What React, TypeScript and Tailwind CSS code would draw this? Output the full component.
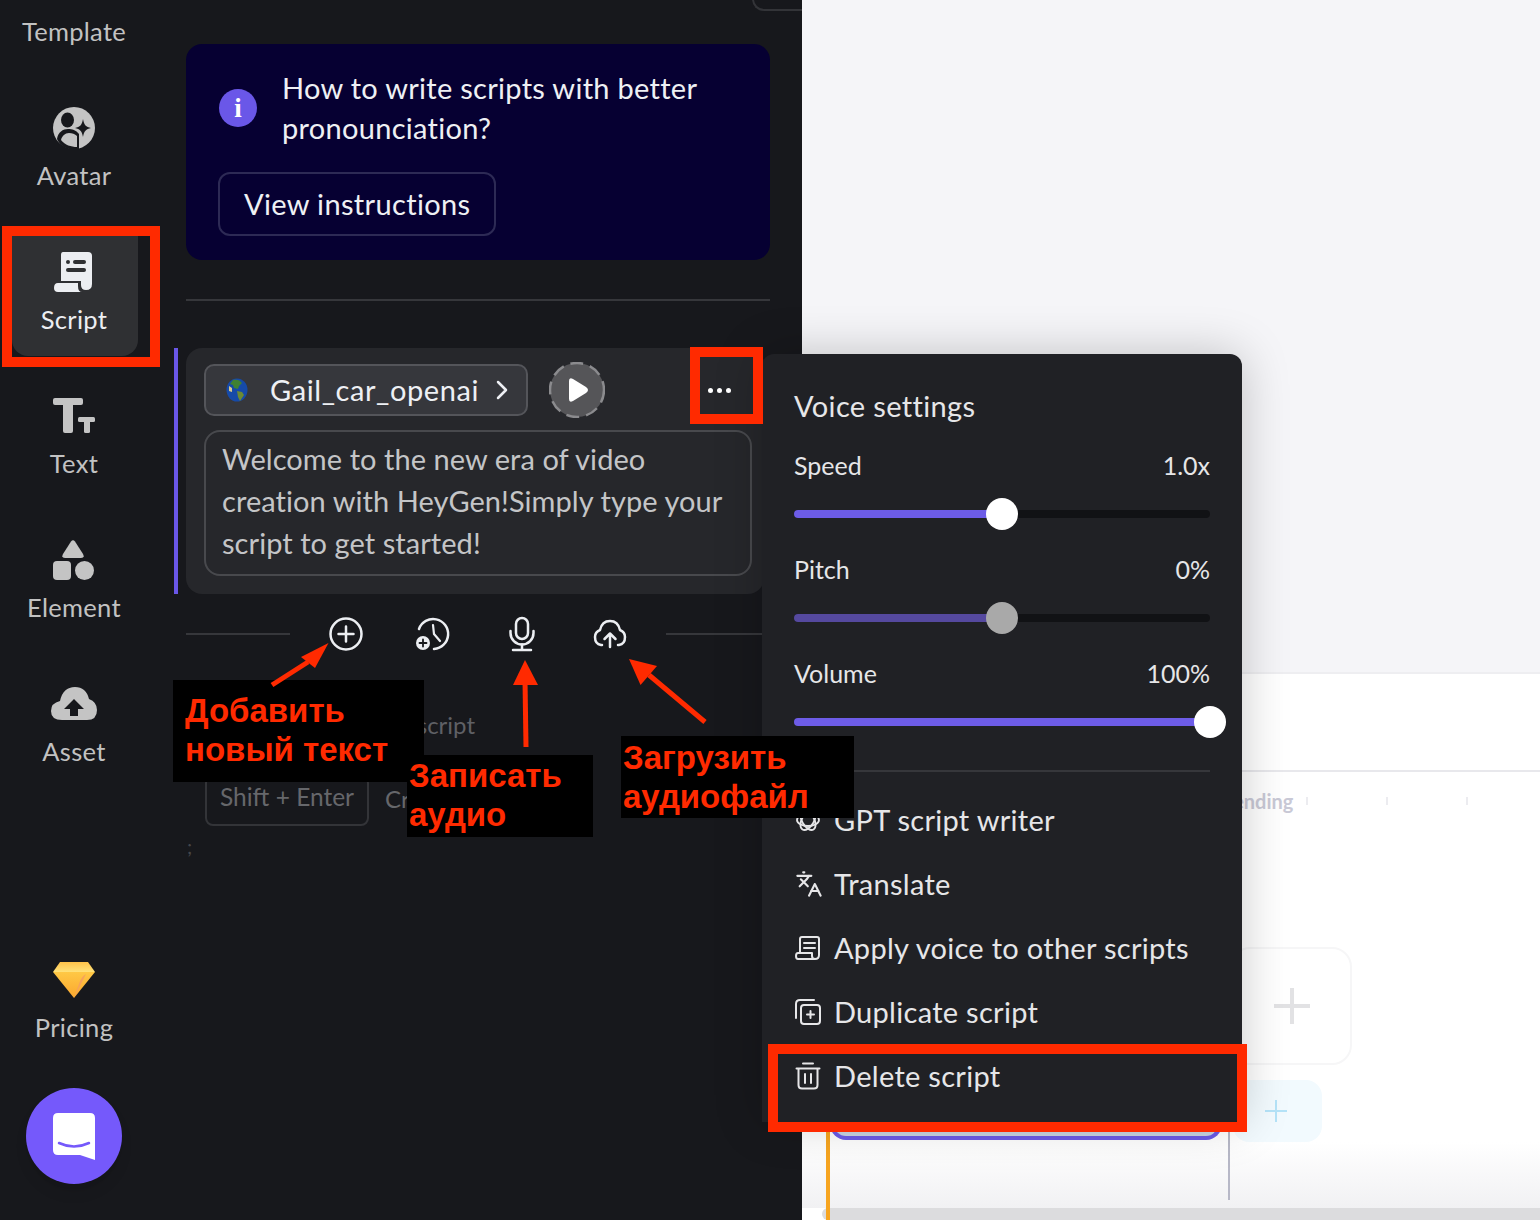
import React from "react";
import { Languages } from "lucide-react";

function NavItem({ label, icon, active, itemClass = "" }: { label: string; icon: React.ReactNode; active?: boolean; itemClass?: string }) {
  return (
    <div className={`h-[120px] w-[126px] rounded-b-2xl flex flex-col items-center pr-[2px] pt-3 ${active ? "bg-[#2f3033] text-[#eceef2]" : "text-[#c2c2c2]"} ${itemClass}`}>
      <div className="h-12 w-full flex items-center justify-center">{icon}</div>
      <div className="mt-[11px] h-6 leading-6 text-[25.500px] tracking-[0.012em]">{label}</div>
    </div>
  );
}

const AvatarIcon = () => (
  <svg width="42" height="42" viewBox="0 0 42 42">
    <circle cx="21" cy="21" r="21" fill="#c4c4c4" />
    <ellipse cx="14.5" cy="13" rx="6.5" ry="7.5" fill="#17181c" />
    <path d="M4 32C5 25 10 22 15 22c4 0 8 1 11 5v15H16C11 41 6 37 4 32Z" fill="#17181c" />
    <path d="M8 33c1-4 4-7 8-7 3 0 6 1 8 3v11c-6 0-12-2-16-7Z" fill="#c4c4c4" />
    <path d="M30 12c1 6 3 8 8 9-5 1-7 3-8 9-1-6-3-8-8-9 5-1 7-3 8-9Z" fill="#17181c" />
  </svg>
);
const ScriptIcon = () => (
  <svg width="40" height="44" viewBox="54 250 40 44">
    <path d="M63 252H88Q92 252 92 256V284Q92 290 86 290Q81 290 81 285V281H61V255Q61 252 63 252Z" fill="#eceef2" />
    <path d="M58 283H78V286Q78 292 82 292H58Q54 292 54 288Q54 283 58 283Z" fill="#eceef2" />
    <circle cx="68" cy="262" r="2" fill="#2f3033" />
    <rect x="73" y="260" width="13" height="4" rx="2" fill="#2f3033" />
    <rect x="66" y="268" width="20" height="4" rx="2" fill="#2f3033" />
  </svg>
);
const TextIcon = () => (
  <svg width="42" height="36" viewBox="53 399 42 36" fill="#c4c4c4">
    <rect x="53" y="399" width="30" height="7" rx="2" />
    <rect x="63" y="399" width="10" height="35" rx="2" />
    <rect x="78" y="418" width="17" height="5" rx="1.5" />
    <rect x="84" y="418" width="6" height="16" rx="1.5" />
  </svg>
);
const ElementIcon = () => (
  <svg width="42" height="40" viewBox="53 540 42 40" fill="#c4c4c4">
    <path d="M71 541.5Q73 539 75 541.5L83 554Q85 558 81 558H65Q61 558 63 554Z" />
    <rect x="53" y="561" width="18" height="19" rx="4" />
    <ellipse cx="84.500" cy="570.500" rx="9.500" ry="9.500" />
  </svg>
);
const AssetIcon = () => (
  <svg width="46" height="34" viewBox="51 686 46 34">
    <path d="M62 719Q51 719 51 710Q51 702 60 700Q63 686 75 686Q86 686 89 698Q97 701 97 709Q97 719 87 719Z" fill="#c4c4c4" />
    <path d="M74 698L84 708H78V715H70V708H64Z" fill="#17181c" />
  </svg>
);
const GemIcon = () => (
  <svg width="42" height="36" viewBox="53 962 42 36">
    <defs>
      <linearGradient id="gemTop" x1="0" y1="0" x2="0" y2="1"><stop offset="0" stopColor="#ffc24a" /><stop offset="1" stopColor="#ffe27a" /></linearGradient>
      <linearGradient id="gemLow" x1="0" y1="0" x2="0" y2="1"><stop offset="0" stopColor="#ffc845" /><stop offset="1" stopColor="#fba72e" /></linearGradient>
    </defs>
    <path d="M60 962H88L95 972H53Z" fill="url(#gemTop)" />
    <path d="M53 972H95L74 998Z" fill="url(#gemLow)" />
    <path d="M86 974L74 998L79 984Q81 977 86 974Z" fill="#f6a25c" />
  </svg>
);

const LogoBubble = () => (
  <svg width="42" height="47" viewBox="53 1112 42 47">
    <path d="M58 1112H90Q95 1112 95 1117V1159L80 1154H58Q53 1154 53 1149V1117Q53 1112 58 1112Z" fill="#ffffff" />
    <path d="M59 1142Q74 1149 89 1142" fill="none" stroke="#7559fb" strokeWidth="2.500" strokeLinecap="round" />
  </svg>
);

const Globe = () => (
  <svg width="22" height="24" viewBox="0 0 22 24">
    <ellipse cx="11" cy="12" rx="10.500" ry="11.500" fill="#164aa8" />
    <path d="M7 2c4-1 7 0 9 3l-3 3-1 3-4-1-1-3-3-1Z" fill="#3f8132" />
    <path d="M11 13l5 1 2 3-4 6-2-4Z" fill="#6b8a34" />
    <path d="M3 8l3 2 0 4-3-1Z" fill="#d8c98a" />
  </svg>
);

const PlayBadge = () => (
  <svg width="56" height="56" viewBox="0 0 56 56">
    <circle cx="28" cy="28" r="27" fill="#555558" stroke="#8b8b8e" strokeWidth="2.500" strokeDasharray="13 7" />
    <path d="M20 19Q20 15 24 17L37 25Q41 28 37 31L24 39Q20 41 20 37Z" fill="#ffffff" />
  </svg>
);

const PlusCircleIcon = () => (
  <svg width="36" height="36" viewBox="0 0 36 36" fill="none" stroke="#eceef2" strokeWidth="2.500" strokeLinecap="round">
    <circle cx="18" cy="18" r="15.500" />
    <path d="M18 10.500V25.500M10.500 18H25.500" />
  </svg>
);
const HistoryIcon = () => (
  <svg width="36" height="36" viewBox="0 0 36 36" fill="none" stroke="#eceef2" strokeWidth="2.500" strokeLinecap="round">
    <path d="M19 33A15 15 0 1 0 4 13" />
    <path d="M18 9L19 18L25 25" strokeWidth="2.200" />
    <circle cx="8" cy="27" r="7" fill="#eceef2" stroke="none" />
    <path d="M8 23.500V30.500M4.500 27H11.500" stroke="#17181c" strokeWidth="1.800" />
  </svg>
);
const MicIcon = () => (
  <svg width="28" height="36" viewBox="0 0 28 36" fill="none" stroke="#eceef2" strokeWidth="2.500" strokeLinecap="round">
    <rect x="8" y="2" width="12" height="21" rx="6" />
    <path d="M2.500 15V17A11.500 11.500 0 0 0 25.500 17V15" />
    <path d="M14 28.500V33M5 34H23" />
  </svg>
);
const UploadIcon = () => (
  <svg width="36" height="30" viewBox="0 0 36 30" fill="none" stroke="#eceef2" strokeWidth="2.500" strokeLinecap="round" strokeLinejoin="round">
    <path d="M10 26H9Q3 25 3 18Q3 13 8 11Q10 2 18 2Q26 2 28 11Q33 13 33 18Q33 25 27 26H26" />
    <path d="M18 28V15M12.500 20L18 14.500L23.500 20" />
  </svg>
);

const GptIcon = () => (
  <svg width="26" height="26" viewBox="0 0 26 26" fill="none" stroke="#e6e6e8" strokeWidth="1.800">
    <ellipse cx="13" cy="13" rx="11" ry="6" />
    <ellipse cx="13" cy="13" rx="11" ry="6" transform="rotate(60 13 13)" />
    <ellipse cx="13" cy="13" rx="11" ry="6" transform="rotate(120 13 13)" />
  </svg>
);
const ApplyIcon = () => (
  <svg width="26" height="26" viewBox="0 0 26 26" fill="none" stroke="#e6e6e8" strokeWidth="2" strokeLinejoin="round" strokeLinecap="round">
    <path d="M5 18V4Q5 2 7 2H22Q24 2 24 4V20Q24 24 20 24H3Q1 24 1 21Q1 18 3 18H17V21Q17 24 20 24" />
    <path d="M9 8H20M9 13H20" />
  </svg>
);
const DuplicateIcon = () => (
  <svg width="26" height="26" viewBox="0 0 26 26" fill="none" stroke="#e6e6e8" strokeWidth="2" strokeLinecap="round">
    <rect x="6" y="6" width="19" height="19" rx="3" />
    <path d="M1 19V5Q1 1 5 1H19" />
    <path d="M15.500 12V19M12 15.500H19" />
  </svg>
);
const TrashIcon = () => (
  <svg width="26" height="28" viewBox="0 0 26 28" fill="none" stroke="#e6e6e8" strokeWidth="2" strokeLinecap="round">
    <path d="M8 1.500H18M1.500 6.500H24.500" />
    <path d="M3.500 7V23Q3.500 26.500 7 26.500H19Q22.500 26.500 22.500 23V7" />
    <path d="M10 12V21M16 12V21" />
  </svg>
);

function Slider({ label, value, fill, thumb, pos }: { label: string; value: string; fill: string; thumb: string; pos: string }) {
  return (
    <div className="mb-[26px]">
      <div className="h-7 flex items-center justify-between text-[25px] text-[#e6e6e8]">
        <span>{label}</span>
        <span>{value}</span>
      </div>
      <div className="relative mt-[18px] h-8 flex items-center">
        <div className="h-2 w-full rounded-full bg-[#111215] overflow-hidden">
          <div className={`h-full ${pos} ${fill}`} />
        </div>
        <div className={`absolute top-0 ml-[-16px] h-8 w-8 rounded-full ${thumb} ${pos === "w-1/2" ? "left-1/2" : "left-full"}`} />
      </div>
    </div>
  );
}

function MenuItem({ icon, label }: { icon: React.ReactNode; label: string }) {
  return (
    <div className="h-16 flex items-center">
      <div className="w-10 flex items-center pl-px">{icon}</div>
      <span className="text-[29px] tracking-[0.01em] text-[#e6e6e8]">{label}</span>
    </div>
  );
}

function Note({ className, lines }: { className: string; lines: string[] }) {
  return (
    <div className={`absolute z-30 bg-black font-['Liberation_Sans',sans-serif] font-bold text-[33px] leading-[39px] text-[#ff2a00] ${className}`}>
      {lines.map((l) => <div key={l}>{l}</div>)}
    </div>
  );
}

export default function App() {
  return (
    <div className="relative flex h-[1220px] w-[1540px] overflow-hidden bg-white font-['Lato',sans-serif]">
      {/* Icon rail */}
      <nav className="flex h-full w-[148px] shrink-0 flex-col bg-[#17181c] pl-3">
        <div className="-mt-[52px] flex flex-col gap-6">
          <NavItem label="Template" icon={<div className="mt-[-46px] h-[2px] w-[33px] bg-[#8a8a8a]" />} />
          <NavItem label="Avatar" icon={<AvatarIcon />} />
          <NavItem label="Script" icon={<ScriptIcon />} active />
          <NavItem label="Text" icon={<TextIcon />} />
          <NavItem label="Element" icon={<ElementIcon />} />
          <NavItem label="Asset" icon={<AssetIcon />} />
        </div>
        <div className="mt-auto flex flex-col gap-6 pb-9">
          <NavItem label="Pricing" icon={<GemIcon />} />
          <div className="ml-[14px] flex h-24 w-24 items-center justify-center rounded-full bg-[#7559fb] shadow-lg">
            <LogoBubble />
          </div>
        </div>
      </nav>

      {/* Script panel */}
      <main className="relative w-[654px] shrink-0 bg-[#17181c] pl-[38px] pr-8">
        <div className="absolute right-0 top-[-20px] h-[31px] w-[50px] rounded-bl-xl border-b-2 border-l-2 border-[#333438]" />
        <section className="mt-[44px] h-[216px] rounded-2xl bg-[#060032] px-8 pt-[24px]">
          <div className="ml-px flex items-center gap-[25px]">
            <div className="flex h-[38px] w-[38px] shrink-0 items-center justify-center rounded-full bg-[#6a57e8] text-[27px] font-bold leading-none text-white font-['Liberation_Serif',serif]">i</div>
            <p className="text-[29px] leading-10 tracking-[0.01em] text-[#eef0f4]">How to write scripts with better<br />pronounciation?</p>
          </div>
          <div className="mt-6 flex h-16 w-[278px] items-center rounded-xl border-2 border-[#2d2a55] pl-6 text-[29px] tracking-[0.012em] text-[#eef0f4]">View instructions</div>
        </section>
        <div className="mt-[39px] h-[2px] bg-[#36373b]" />

        <section className="-ml-3 mt-[47px] flex h-[246px] gap-2">
          <div className="w-1 shrink-0 bg-[#6a57e8]" />
          <div className="w-[578px] shrink-0 rounded-2xl bg-[#26272b] pl-[18px] pt-[14px]">
            <div className="flex items-center">
              <div className="flex h-[52px] w-[324px] items-center rounded-[10px] border-2 border-[#54555a] bg-[#36373c] pl-5">
                <Globe />
                <span className="ml-[22px] text-[29px] tracking-[0.02em] text-[#eef0f4]">Gail_car_openai</span>
                <svg className="ml-auto mr-[18px]" width="12" height="20" viewBox="0 0 12 20" fill="none" stroke="#eef0f4" strokeWidth="2.500" strokeLinecap="round" strokeLinejoin="round"><path d="M2 2L10 10L2 18" /></svg>
              </div>
              <div className="ml-[21px]"><PlayBadge /></div>
              <div className="ml-[103px] flex gap-1">
                <span className="h-[5px] w-[5px] rounded-full bg-white" />
                <span className="h-[5px] w-[5px] rounded-full bg-white" />
                <span className="h-[5px] w-[5px] rounded-full bg-white" />
              </div>
            </div>
            <div className="mt-3 h-[146px] w-[548px] rounded-2xl border-2 border-[#48494d] px-4 py-[6px] text-[29px] leading-[42px] tracking-[0.002em] text-[#c4c5c7]">
              Welcome to the new era of video<br />creation with HeyGen!Simply type your<br />script to get started!
            </div>
          </div>
        </section>

        <div className="mt-5 flex h-10 w-[576px] items-center">
          <div className="h-[2px] w-[104px] bg-[#36373b]" />
          <div className="ml-[38px] flex h-9 w-9 items-center justify-center"><PlusCircleIcon /></div>
          <div className="ml-[51px] flex h-9 w-9 items-center justify-center"><HistoryIcon /></div>
          <div className="ml-[53px] flex h-9 w-9 items-center justify-center"><MicIcon /></div>
          <div className="ml-[52px] flex h-9 w-9 items-center justify-center"><UploadIcon /></div>
          <div className="ml-[38px] h-[2px] w-[96px] bg-[#36373b]" />
        </div>

        <div className="mt-[57px] h-7 w-[289px] text-right text-[24px] leading-7 text-[#5f6065]">Add new script</div>
        <div className="ml-[19px] mt-[36px] flex items-center">
          <div className="flex h-[51px] w-[164px] items-center justify-center rounded-lg border-2 border-[#333438] pb-[6px] text-[24.500px] text-[#66676b]">Shift + Enter</div>
          <span className="mb-1 ml-4 whitespace-nowrap text-[24px] text-[#66676b]">Create a script third</span>
        </div>
        <div className="ml-px mt-[8px] text-[20px] leading-6 text-[#46474b]">;</div>

        {/* Collapse tab */}
        <svg className="absolute left-full top-[186px] z-0" width="30" height="170" viewBox="0 0 30 170">
          <path d="M0 0Q1 12 14 20Q30 28 30 46V144Q30 164 12 170H0Z" fill="#17181c" />
          <path d="M17 81L7 92L17 103" fill="none" stroke="#eceef2" strokeWidth="2.200" strokeLinecap="round" strokeLinejoin="round" />
        </svg>
      </main>

      {/* Canvas and timeline */}
      <div className="relative flex flex-1 flex-col">
        <div className="h-[674px] border-b-2 border-[#eeeef1] bg-[#f5f5f8]" />
        <div className="h-[98px] border-b-2 border-[#e8e8ec] bg-white" />
        <div className="flex h-[57px] items-center pl-[414px] text-[20px] font-bold text-[#c9c9d6]">
          <span>Trending</span>
          <span className="ml-[13px] h-2 w-[2px] bg-[#ececf0]" />
          <span className="ml-[78px] h-2 w-[2px] bg-[#ececf0]" />
          <span className="ml-[78px] h-2 w-[2px] bg-[#ececf0]" />
        </div>
        <div className="ml-[428px] mt-[118px] flex h-[118px] w-[122px] items-center justify-center rounded-[20px] border-2 border-[#f6f6f7] pl-[2px]">
          <svg width="36" height="36" viewBox="0 0 36 36" stroke="#e2e2e4" strokeWidth="4"><path d="M18 0V36M0 18H36" /></svg>
        </div>
        <div className="ml-[431px] mt-[15px] flex h-[62px] w-[89px] items-center justify-center rounded-2xl bg-[#f2fafe] pr-[3px]">
          <svg width="22" height="22" viewBox="0 0 22 22" stroke="#b5e3f8" strokeWidth="2"><path d="M11 0V22M0 11H22" /></svg>
        </div>
        <div className="flex-1 bg-gradient-to-b from-white to-[#f1f1f3]" />
        <div className="ml-5 h-3 rounded-l-md bg-[#dcdcde]" />

        <div className="absolute left-[28px] top-[1102px] h-[38px] w-[392px] rounded-b-2xl border-b-4 border-l-4 border-r-4 border-[#6d5ce7] bg-[#c9d6e3]" />
        <div className="absolute bottom-0 left-6 top-[1120px] w-1 bg-[#f7a520]" />
        <div className="absolute left-[426px] top-[1120px] h-20 w-[2px] bg-[#b7b8c7]" />
      </div>

      {/* Voice settings menu */}
      <div className="absolute left-[762px] top-[354px] z-10 h-[768px] w-[480px] rounded-t-xl bg-[#202125] px-8 pt-8 shadow-[0_0_48px_rgba(0,0,0,0.22)]">
        <div className="mb-[26px] h-10 text-[29px] leading-10 tracking-[0.012em] text-[#e6e6e8]">Voice settings</div>
        <Slider label="Speed" value="1.0x" fill="bg-[#6d5ce7]" thumb="bg-white" pos="w-1/2" />
        <Slider label="Pitch" value="0%" fill="bg-[#55499f]" thumb="bg-[#a9a9a9]" pos="w-1/2" />
        <Slider label="Volume" value="100%" fill="bg-[#6d5ce7]" thumb="bg-white" pos="w-full" />
        <div className="mb-4 mt-8 h-[2px] bg-[#36373b]" />
        <MenuItem icon={<GptIcon />} label="GPT script writer" />
        <MenuItem icon={<Languages size={28} color="#e6e6e8" strokeWidth={1.8} />} label="Translate" />
        <MenuItem icon={<ApplyIcon />} label="Apply voice to other scripts" />
        <MenuItem icon={<DuplicateIcon />} label="Duplicate script" />
        <MenuItem icon={<TrashIcon />} label="Delete script" />
      </div>

      {/* Annotations */}
      <div className="absolute left-[2px] top-[226px] z-20 h-[141px] w-[158px] border-[10px] border-[#ff2a00]" />
      <div className="absolute left-[690px] top-[347px] z-20 h-[77px] w-[73px] border-[10px] border-[#ff2a00]" />
      <div className="absolute left-[768px] top-[1044px] z-20 h-[88px] w-[479px] border-[10px] border-[#ff2a00]" />

      <Note className="left-[173px] top-[680px] h-[102px] w-[251px] pl-3 pt-[11px]" lines={["Добавить", "новый текст"]} />
      <Note className="left-[407px] top-[755px] h-[82px] w-[186px] pl-[2px] pt-px" lines={["Записать", "аудио"]} />
      <Note className="left-[621px] top-[736px] h-[82px] w-[233px] pl-[2px] pt-[2px]" lines={["Загрузить", "аудиофайл"]} />

      <svg className="absolute left-0 top-0 z-30 pointer-events-none" width="1540" height="1220" viewBox="0 0 1540 1220">
        <path d="M272 685L308 662" stroke="#ff2a00" strokeWidth="5" />
        <path d="M328.500 643L301 657L315 668Z" fill="#ff2a00" />
        <path d="M526 747L525 680" stroke="#ff2a00" strokeWidth="5" />
        <path d="M525 660L513 685H538Z" fill="#ff2a00" />
        <path d="M705 722L649 675" stroke="#ff2a00" strokeWidth="5" />
        <path d="M629 659L657 666L640.500 685Z" fill="#ff2a00" />
      </svg>
    </div>
  );
}
